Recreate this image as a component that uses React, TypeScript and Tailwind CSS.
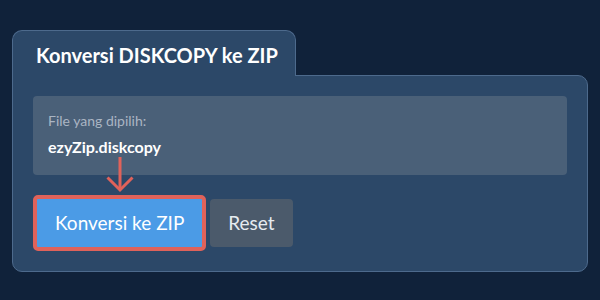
import { FC } from "react";

const App: FC = () => {
    return (
        <div className="w-full h-[300px] bg-[#10223a] px-3 pt-[30px] font-['Lato','Noto_Sans',sans-serif]">
            <div className="flex flex-col">
                <div className="relative z-10 -mb-px w-[284px] rounded-t-[10px] border border-b-0 border-[#4d6a8c] bg-[#2c4868] pl-[23px] pt-[10px] pb-[7px]">
                    <h1 className="text-[20px] leading-[28px] font-bold text-white">Konversi DISKCOPY ke ZIP</h1>
                </div>
                <div className="relative rounded-[10px] rounded-tl-none border border-[#4d6a8c] bg-[#2c4868] p-5">
                    <div className="rounded-[4px] bg-[#4a6078] px-[15px] pt-[15px] pb-[17px]">
                        <p className="text-[14px] leading-[20px] text-[#aab5c3]">File yang dipilih:</p>
                        <p className="mt-[5px] text-[16px] leading-[22px] font-bold text-white">ezyZip.diskcopy</p>
                    </div>
                    {/* arrow pointing at the convert button */}
                    <svg className="absolute left-[93px] top-[81px]" width="28" height="36" viewBox="0 0 28 36" fill="none">
                        <path d="M14 0 V33" stroke="#e0625a" strokeWidth="3" />
                        <path d="M1.5 20.5 L14 33 L26.5 20.5" stroke="#e0625a" strokeWidth="3" />
                    </svg>
                    <div className="mt-5 flex items-center gap-1">
                        <button className="rounded-[5px] border-4 border-[#e0625a] bg-[#4b9be6] px-[18px] py-[10px] text-[19px] leading-[28px] text-white">
                            Konversi ke ZIP
                        </button>
                        <button className="rounded-[4px] bg-[#4b5a6b] px-[18px] py-[10px] text-[19px] leading-[28px] text-[#e6ebf0]">
                            Reset
                        </button>
                    </div>
                </div>
            </div>
        </div>
    );
}

export default App;
